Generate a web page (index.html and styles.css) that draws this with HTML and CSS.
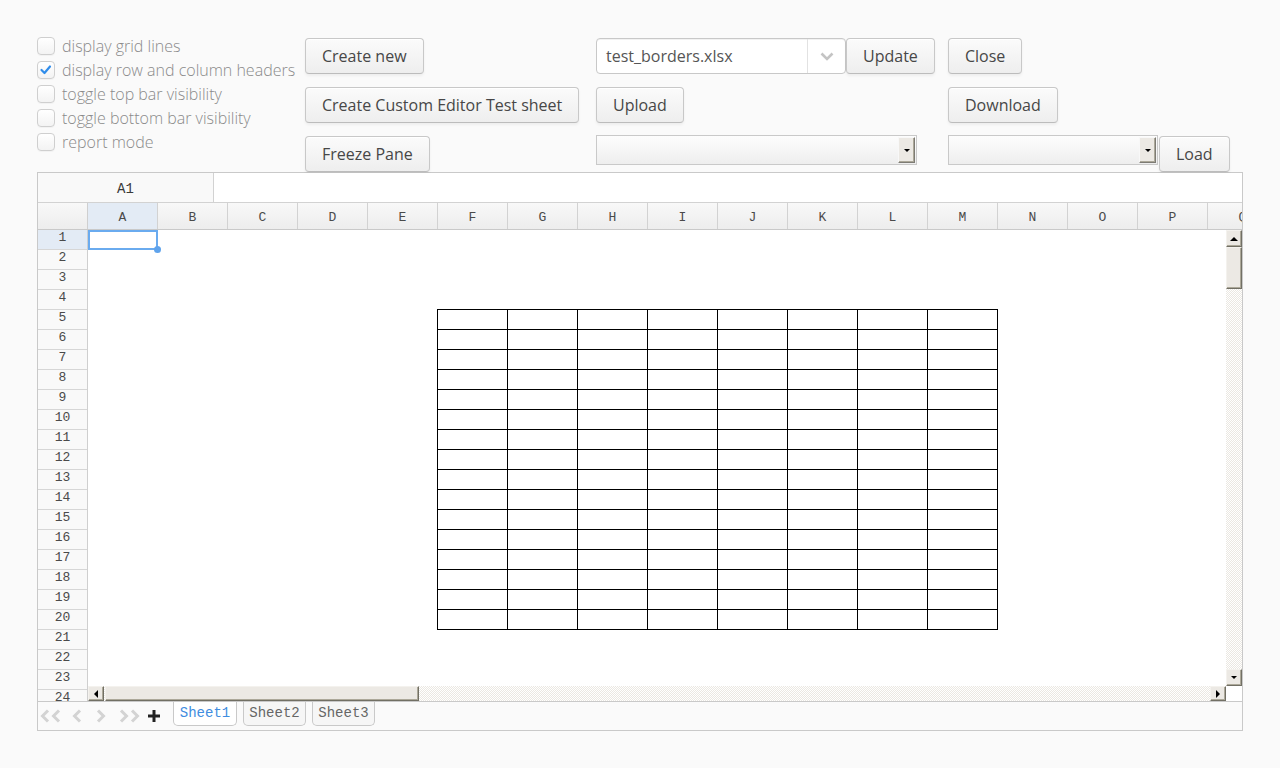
FILE: index.html
```html
<!DOCTYPE html>
<html lang="en">
<head>
<meta charset="utf-8">
<title>Spreadsheet</title>
<link rel="stylesheet" href="styles.css">
</head>
<body>
<div class="page">
  <div class="topbar">
    <div class="checks">
      <div class="check"><span class="box"></span><span>display grid lines</span></div>
      <div class="check"><span class="box"><svg width="18" height="18" viewBox="0 0 18 18"><polyline points="4.5,9 7.5,12 13,5.5" fill="none" stroke="#2f8cea" stroke-width="2.2" stroke-linecap="round" stroke-linejoin="round"/></svg></span><span>display row and column headers</span></div>
      <div class="check"><span class="box"></span><span>toggle top bar visibility</span></div>
      <div class="check"><span class="box"></span><span>toggle bottom bar visibility</span></div>
      <div class="check"><span class="box"></span><span>report mode</span></div>
    </div>
    <div class="stack">
      <button class="btn">Create new</button>
      <button class="btn">Create Custom Editor Test sheet</button>
      <button class="btn">Freeze Pane</button>
    </div>
    <div class="stack">
      <div class="line">
        <div class="combo">
          <span class="combo-text">test_borders.xlsx</span>
          <span class="combo-btn"><svg width="14" height="9" viewBox="0 0 14 9"><polyline points="1.5,1.5 7,7 12.5,1.5" fill="none" stroke="#c4c4c4" stroke-width="2.6"/></svg></span>
        </div>
        <button class="btn">Update</button>
      </div>
      <button class="btn">Upload</button>
      <div class="select sel-wide"><span class="sel-arrow"><span class="tri-down"></span></span></div>
    </div>
    <div class="stack">
      <button class="btn">Close</button>
      <button class="btn">Download</button>
      <div class="line gap1">
        <div class="select sel-narrow"><span class="sel-arrow"><span class="tri-down"></span></span></div>
        <button class="btn">Load</button>
      </div>
    </div>
  </div>

  <div class="sheet">
    <div class="formula">
      <div class="namebox">A1</div>
      <div class="fbar-input"></div>
    </div>
    <div class="colheads">
      <div class="corner"></div>
      <div class="ch sel">A</div><div class="ch">B</div><div class="ch">C</div><div class="ch">D</div>
      <div class="ch">E</div><div class="ch">F</div><div class="ch">G</div><div class="ch">H</div>
      <div class="ch">I</div><div class="ch">J</div><div class="ch">K</div><div class="ch">L</div>
      <div class="ch">M</div><div class="ch">N</div><div class="ch">O</div><div class="ch">P</div>
      <div class="ch">Q</div>
    </div>
    <div class="body">
      <div class="rowheads">
        <div class="rh sel">1</div><div class="rh">2</div><div class="rh">3</div><div class="rh">4</div>
        <div class="rh">5</div><div class="rh">6</div><div class="rh">7</div><div class="rh">8</div>
        <div class="rh">9</div><div class="rh">10</div><div class="rh">11</div><div class="rh">12</div>
        <div class="rh">13</div><div class="rh">14</div><div class="rh">15</div><div class="rh">16</div>
        <div class="rh">17</div><div class="rh">18</div><div class="rh">19</div><div class="rh">20</div>
        <div class="rh">21</div><div class="rh">22</div><div class="rh">23</div><div class="rh">24</div>
      </div>
      <div class="cells">
        <div class="bordered" id="bordered"></div>
        <div class="selection"><span class="handle"></span></div>
      </div>
      <div class="vscroll">
        <span class="sb-btn v"><span class="tri-up"></span></span>
        <span class="sb-thumb vthumb"></span>
        <span class="sb-track"></span>
        <span class="sb-btn v"><span class="tri-down"></span></span>
      </div>
      <div class="hscroll">
        <span class="sb-btn h"><span class="tri-left"></span></span>
        <span class="sb-thumb hthumb"></span>
        <span class="sb-track"></span>
        <span class="sb-btn h"><span class="tri-right"></span></span>
      </div>
      <div class="sb-corner"></div>
    </div>
    <div class="bottombar">
      <span class="nav w32"><svg width="22" height="14" viewBox="0 0 22 14"><polyline points="8,1.5 2.5,7 8,12.5" fill="none" stroke="#d3d3d3" stroke-width="3"/><polyline points="19,1.5 13.5,7 19,12.5" fill="none" stroke="#d3d3d3" stroke-width="3"/></svg></span>
      <span class="nav w24"><svg width="10" height="14" viewBox="0 0 10 14"><polyline points="8,1.5 2.5,7 8,12.5" fill="none" stroke="#d3d3d3" stroke-width="3"/></svg></span>
      <span class="nav w23"><svg width="10" height="14" viewBox="0 0 10 14"><polyline points="2,1.5 7.5,7 2,12.5" fill="none" stroke="#d3d3d3" stroke-width="3"/></svg></span>
      <span class="nav w29"><svg width="22" height="14" viewBox="0 0 22 14"><polyline points="2,1.5 7.5,7 2,12.5" fill="none" stroke="#d3d3d3" stroke-width="3"/><polyline points="13,1.5 18.5,7 13,12.5" fill="none" stroke="#d3d3d3" stroke-width="3"/></svg></span>
      <span class="nav w25"><svg width="12" height="12" viewBox="0 0 12 12"><rect x="4.5" y="0" width="3" height="12" fill="#222"/><rect x="0" y="4.5" width="12" height="3" fill="#222"/></svg></span>
      <div class="tabs">
        <span class="tab active">Sheet1</span>
        <span class="tab">Sheet2</span>
        <span class="tab">Sheet3</span>
      </div>
    </div>
  </div>
</div>
<script src="script.js"></script>
</body>
</html>
```

FILE: script.js
```js
(function () {
  var b = document.getElementById('bordered');
  var html = '';
  for (var i = 0; i < 16 * 8; i++) html += '<span class="bc"></span>';
  b.innerHTML = html;
})();
```

FILE: styles.css
```css
html, body {
  margin: 0;
  background: #fafafa;
}

body {
  font-family: "Open Sans", "Liberation Sans", sans-serif;
}

.page {
  padding: 34px 37px 0;
}

/* ---------- top bar ---------- */
.topbar {
  display: grid;
  grid-template-columns: 268px 291px 352px 1fr;
  height: 138px;
}

.checks {
  display: flex;
  flex-direction: column;
}

.check {
  display: flex;
  align-items: center;
  height: 24px;
  font-size: 16px;
  font-weight: 300;
  color: #8a8a8a;
  white-space: nowrap;
}

.box {
  width: 18px;
  height: 18px;
  box-sizing: border-box;
  border: 1px solid #cfcfcf;
  border-radius: 4px;
  background: linear-gradient(#ffffff, #f3f3f3);
  box-shadow: 0 1px 0 rgba(0, 0, 0, 0.03);
  margin-right: 7px;
  display: flex;
  align-items: center;
  justify-content: center;
  flex: none;
}

.box svg {
  margin: -1px;
}

.stack {
  display: flex;
  flex-direction: column;
  align-items: flex-start;
  gap: 13px;
  padding-top: 4px;
}

.line {
  display: flex;
  align-items: flex-start;
}

.gap1 {
  gap: 1px;
}

.btn {
  height: 36px;
  box-sizing: border-box;
  padding: 0 16px;
  font: 16px "Open Sans", "Liberation Sans", sans-serif;
  color: #474747;
  background: linear-gradient(#fbfbfb, #eeeeee);
  border: 1px solid #c8c8c8;
  border-bottom-color: #bcbcbc;
  border-radius: 4px;
  box-shadow: inset 0 1px 0 #ffffff, 0 2px 3px rgba(0, 0, 0, 0.05);
  white-space: nowrap;
  cursor: default;
}

.combo {
  width: 250px;
  height: 36px;
  box-sizing: border-box;
  border: 1px solid #c8c8c8;
  border-radius: 4px;
  background: #ffffff;
  display: flex;
  box-shadow: inset 0 1px 0 #f2f2f2;
}

.combo-text {
  flex: 1;
  padding-left: 9px;
  line-height: 34px;
  font-size: 16px;
  color: #555555;
}

.combo-btn {
  width: 37px;
  border-left: 1px solid #e2e2e2;
  display: flex;
  align-items: center;
  justify-content: center;
  flex: none;
}

.select {
  height: 30px;
  box-sizing: border-box;
  border: 1px solid #c9c9c9;
  background: linear-gradient(#fdfdfd, #eeeeee);
  margin-top: -1px;
  display: flex;
  justify-content: flex-end;
  align-items: center;
  padding-right: 1px;
}

.sel-wide {
  width: 321px;
}

.sel-narrow {
  width: 210px;
}

.sel-arrow {
  width: 17px;
  height: 26px;
  box-sizing: border-box;
  background: #ece9e4;
  border: 1px solid;
  border-color: #f8f8f8 #7d7b74 #7d7b74 #f8f8f8;
  box-shadow: inset -1px -1px 0 #aca899;
  display: flex;
  align-items: center;
  justify-content: center;
}

.tri-down {
  width: 0;
  height: 0;
  border-left: 3px solid transparent;
  border-right: 3px solid transparent;
  border-top: 3px solid #000;
}

.tri-up {
  width: 0;
  height: 0;
  border-left: 4px solid transparent;
  border-right: 4px solid transparent;
  border-bottom: 4px solid #000;
}

.tri-left {
  width: 0;
  height: 0;
  border-top: 4px solid transparent;
  border-bottom: 4px solid transparent;
  border-right: 4px solid #000;
}

.tri-right {
  width: 0;
  height: 0;
  border-top: 4px solid transparent;
  border-bottom: 4px solid transparent;
  border-left: 4px solid #000;
}

/* ---------- spreadsheet ---------- */
.sheet {
  border: 1px solid #c9c9c9;
  background: #ffffff;
  height: 557px;
  display: flex;
  flex-direction: column;
  font-family: "Liberation Mono", "DejaVu Sans Mono", monospace;
}

.formula {
  display: flex;
  height: 29px;
  border-bottom: 1px solid #d2d2d2;
  flex: none;
}

.namebox {
  width: 175px;
  border-right: 1px solid #d2d2d2;
  background: #f9f9f9;
  text-align: center;
  line-height: 32px;
  font-size: 14px;
  color: #3a3a3a;
}

.fbar-input {
  flex: 1;
  background: #ffffff;
}

.colheads {
  display: flex;
  height: 26px;
  border-bottom: 1px solid #c9c9c9;
  overflow: hidden;
  flex: none;
  background: linear-gradient(#f8f8f8, #ededed);
}

.corner {
  width: 49px;
  flex: none;
  border-right: 1px solid #cfcfcf;
}

.ch {
  width: 69px;
  flex: none;
  border-right: 1px solid #d2d2d2;
  text-align: center;
  line-height: 29px;
  font-size: 13px;
  color: #4a4a4a;
}

.ch.sel {
  background: #e3ebf5;
}

.body {
  display: grid;
  grid-template-columns: 50px 1fr 16px;
  grid-template-rows: 456px 15px;
  height: 471px;
  flex: none;
}

.rowheads {
  grid-row: 1 / 3;
  grid-column: 1;
  overflow: hidden;
  border-right: 1px solid #cfcfcf;
  background: #f9f9f9;
}

.rh {
  height: 19px;
  border-bottom: 1px solid #d6d6d6;
  text-align: center;
  line-height: 15px;
  font-size: 13px;
  color: #4a4a4a;
}

.rh.sel {
  background: #e3ebf5;
}

.cells {
  grid-row: 1;
  grid-column: 2;
  position: relative;
  overflow: hidden;
  background: #ffffff;
}

.bordered {
  margin: 79px 0 0 349px;
  width: max-content;
  display: grid;
  grid-template-columns: repeat(8, 70px);
  grid-auto-rows: 20px;
  border-left: 1px solid #000;
  border-top: 1px solid #000;
}

.bc {
  box-sizing: border-box;
  border-right: 1px solid #000;
  border-bottom: 1px solid #000;
}

.selection {
  position: absolute;
  left: 0;
  top: 0;
  width: 70px;
  height: 20px;
  box-sizing: border-box;
  border: 2px solid #6aabef;
}

.handle {
  position: absolute;
  right: -5px;
  bottom: -5px;
  width: 7px;
  height: 7px;
  border-radius: 50%;
  background: #5fa3ec;
}

.vscroll {
  grid-row: 1;
  grid-column: 3;
  display: flex;
  flex-direction: column;
  background: repeating-conic-gradient(#ebe8e2 0 25%, #ffffff 0 50%) 0 0 / 2px 2px;
}

.hscroll {
  grid-row: 2;
  grid-column: 2;
  display: flex;
  background: repeating-conic-gradient(#ebe8e2 0 25%, #ffffff 0 50%) 0 0 / 2px 2px;
}

.sb-corner {
  grid-row: 2;
  grid-column: 3;
  background: #ffffff;
}

.sb-btn {
  box-sizing: border-box;
  background: #ece9e4;
  border: 1px solid;
  border-color: #f4f2ee #716f64 #716f64 #f4f2ee;
  box-shadow: inset -1px -1px 0 #aca899;
  display: flex;
  align-items: center;
  justify-content: center;
  flex: none;
}

.sb-btn.v {
  height: 17px;
}

.sb-btn.h {
  width: 16px;
}

.sb-thumb {
  box-sizing: border-box;
  background: #ece9e4;
  border: 1px solid;
  border-color: #f4f2ee #716f64 #716f64 #f4f2ee;
  box-shadow: inset -1px -1px 0 #aca899;
  flex: none;
}

.vthumb {
  height: 42px;
}

.hthumb {
  width: 314px;
  margin-left: 1px;
}

.sb-track {
  flex: 1;
}

.bottombar {
  height: 28px;
  border-top: 1px solid #c9c9c9;
  background: #fafafa;
  display: flex;
  align-items: center;
  padding-left: 2px;
  flex: none;
}

.nav {
  display: flex;
  align-items: center;
  flex: none;
  height: 28px;
}

.w32 { width: 32px; }
.w24 { width: 24px; }
.w23 { width: 23px; }
.w29 { width: 29px; }
.w25 { width: 25px; }

.tabs {
  display: flex;
  gap: 6px;
  align-self: flex-start;
}

.tab {
  width: 63px;
  box-sizing: border-box;
  height: 24px;
  border: 1px solid #c9c9c9;
  border-top: none;
  border-radius: 0 0 5px 5px;
  background: #f6f6f6;
  font-size: 14px;
  line-height: 23px;
  text-align: center;
  color: #666666;
}

.tab.active {
  width: 64px;
  background: #ffffff;
  color: #3f8de0;
}
```
